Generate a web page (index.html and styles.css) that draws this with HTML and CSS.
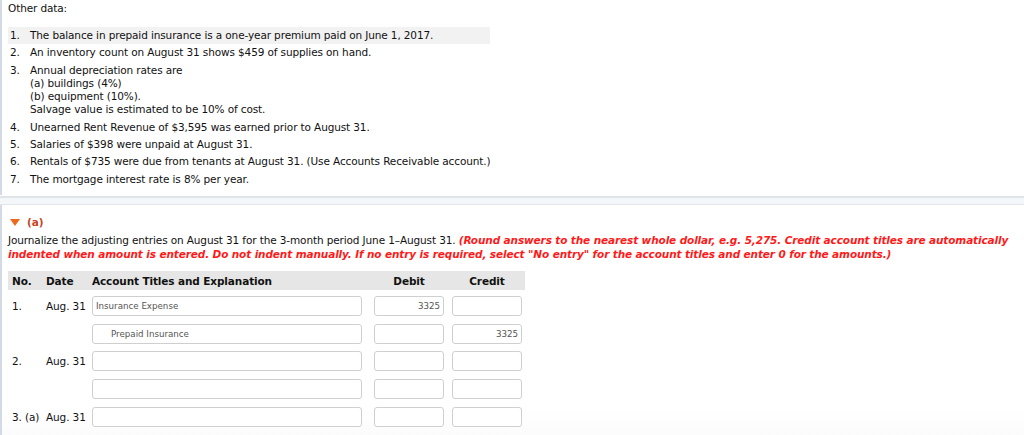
FILE: index.html
```html
<!DOCTYPE html>
<html>
<head>
<meta charset="utf-8">
<link rel="stylesheet" href="styles.css">
</head>
<body>
<div class="panel panel-top">
  <div class="title">Other data:</div>
  <ol class="data">
    <li class="shade"><span class="num">1.</span><span class="txt">The balance in prepaid insurance is a one-year premium paid on June 1, 2017.</span></li>
    <li><span class="num">2.</span><span class="txt">An inventory count on August 31 shows $459 of supplies on hand.</span></li>
    <li><span class="num">3.</span><span class="txt">Annual depreciation rates are<br>(a) buildings (4%)<br>(b) equipment (10%).<br>Salvage value is estimated to be 10% of cost.</span></li>
    <li><span class="num">4.</span><span class="txt">Unearned Rent Revenue of $3,595 was earned prior to August 31.</span></li>
    <li><span class="num">5.</span><span class="txt">Salaries of $398 were unpaid at August 31.</span></li>
    <li><span class="num">6.</span><span class="txt">Rentals of $735 were due from tenants at August 31. (Use Accounts Receivable account.)</span></li>
    <li><span class="num">7.</span><span class="txt">The mortgage interest rate is 8% per year.</span></li>
  </ol>
</div>
<div class="sep"></div>
<div class="panel panel-bottom">
  <div class="part"><span class="tri"></span><span class="part-label">(a)</span></div>
  <p class="instr">Journalize the adjusting entries on August 31 for the 3-month period June 1–August 31. <em class="note">(Round answers to the nearest whole dollar, e.g. 5,275. Credit account titles are automatically indented when amount is entered. Do not indent manually. If no entry is required, select "No entry" for the account titles and enter 0 for the amounts.)</em></p>
  <div class="journal">
    <div class="head">
      <span class="c-no">No.</span><span class="c-date">Date</span><span class="c-acct">Account Titles and Explanation</span><span class="c-amt">Debit</span><span class="c-amt">Credit</span>
    </div>
    <div class="row">
      <span class="c-no">1.</span><span class="c-date">Aug. 31</span>
      <div class="box acct">Insurance Expense</div><div class="box amt">3325</div><div class="box amt"></div>
    </div>
    <div class="row">
      <span class="c-no"></span><span class="c-date"></span>
      <div class="box acct indent">Prepaid Insurance</div><div class="box amt"></div><div class="box amt">3325</div>
    </div>
    <div class="row">
      <span class="c-no">2.</span><span class="c-date">Aug. 31</span>
      <div class="box acct"></div><div class="box amt"></div><div class="box amt"></div>
    </div>
    <div class="row">
      <span class="c-no"></span><span class="c-date"></span>
      <div class="box acct"></div><div class="box amt"></div><div class="box amt"></div>
    </div>
    <div class="row">
      <span class="c-no">3. (a)</span><span class="c-date">Aug. 31</span>
      <div class="box acct"></div><div class="box amt"></div><div class="box amt"></div>
    </div>
  </div>
</div>
</body>
</html>
```

FILE: styles.css
```css
html, body {
  margin: 0;
  padding: 0;
  background: #fff;
}
body {
  font-family: "DejaVu Sans", Verdana, sans-serif;
  font-size: 10.5px;
  letter-spacing: -0.12px;
  color: #111;
  height: 435px;
  overflow: hidden;
}
.panel {
  border-left: 2px solid #d3dae5;
  padding-left: 6px;
}
.panel-top {
  padding-top: 1px;
  height: 195px;
  box-sizing: border-box;
}
.title {
  line-height: 14px;
}
.data {
  list-style: none;
  margin: 12px 0 0;
  padding: 0;
}
.data li {
  display: flex;
  padding: 2px 0;
  line-height: 13.3px;
  width: max-content;
}
.data li.shade {
  background: #f2f2f2;
  width: 482px;
}
.num {
  width: 20px;
  padding-left: 2px;
  flex: none;
}
.sep {
  height: 6px;
  border-top: 2px solid #dfe2e9;
  border-bottom: 1px solid #e1e5ec;
  background: #f4f7fa;
  margin-top: 1px;
}
.panel-bottom {
  padding-top: 12px;
  height: 240px;
  box-sizing: border-box;
  background: linear-gradient(to bottom, #fff 85%, #fafafa 100%);
}
.part {
  display: flex;
  align-items: center;
  gap: 7px;
  height: 10px;
  padding-left: 2px;
}
.tri {
  width: 0;
  height: 0;
  border-left: 5.5px solid transparent;
  border-right: 5.5px solid transparent;
  border-top: 7px solid #ec6a1e;
}
.part-label {
  color: #c5451f;
  font-weight: bold;
}
.instr {
  margin: 6px 0 0;
  line-height: 14px;
  width: 1012px;
}
.note {
  color: #ff1a1a;
  font-weight: bold;
  font-style: italic;
  line-height: 14px;
}
.journal {
  margin-top: 10px;
  width: 517px;
}
.head {
  display: flex;
  align-items: center;
  height: 19px;
  background: #e6e6e6;
  font-weight: bold;
}
.c-no {
  width: 34px;
  padding-left: 4px;
  flex: none;
  white-space: nowrap;
}
.c-date {
  width: 46px;
  flex: none;
  white-space: nowrap;
}
.head .c-acct {
  width: 282px;
  flex: none;
}
.head .c-amt {
  width: 70px;
  text-align: center;
  flex: none;
}
.head .c-amt + .c-amt {
  margin-left: 8px;
}
.row {
  display: flex;
  align-items: center;
  margin-top: 7.7px;
}
.head + .row {
  margin-top: 6px;
}
.box {
  height: 20px;
  box-sizing: border-box;
  border: 1px solid #cfcfcf;
  border-radius: 3px;
  background: #fff;
  font-size: 8.7px;
  letter-spacing: 0;
  color: #555;
  line-height: 18px;
  padding: 0 3px;
  flex: none;
}
.box.acct {
  width: 270px;
}
.box.indent {
  padding-left: 18px;
}
.box.amt {
  width: 70px;
  margin-left: 12px;
  text-align: right;
}
.box.amt + .box.amt {
  margin-left: 8px;
}
```
